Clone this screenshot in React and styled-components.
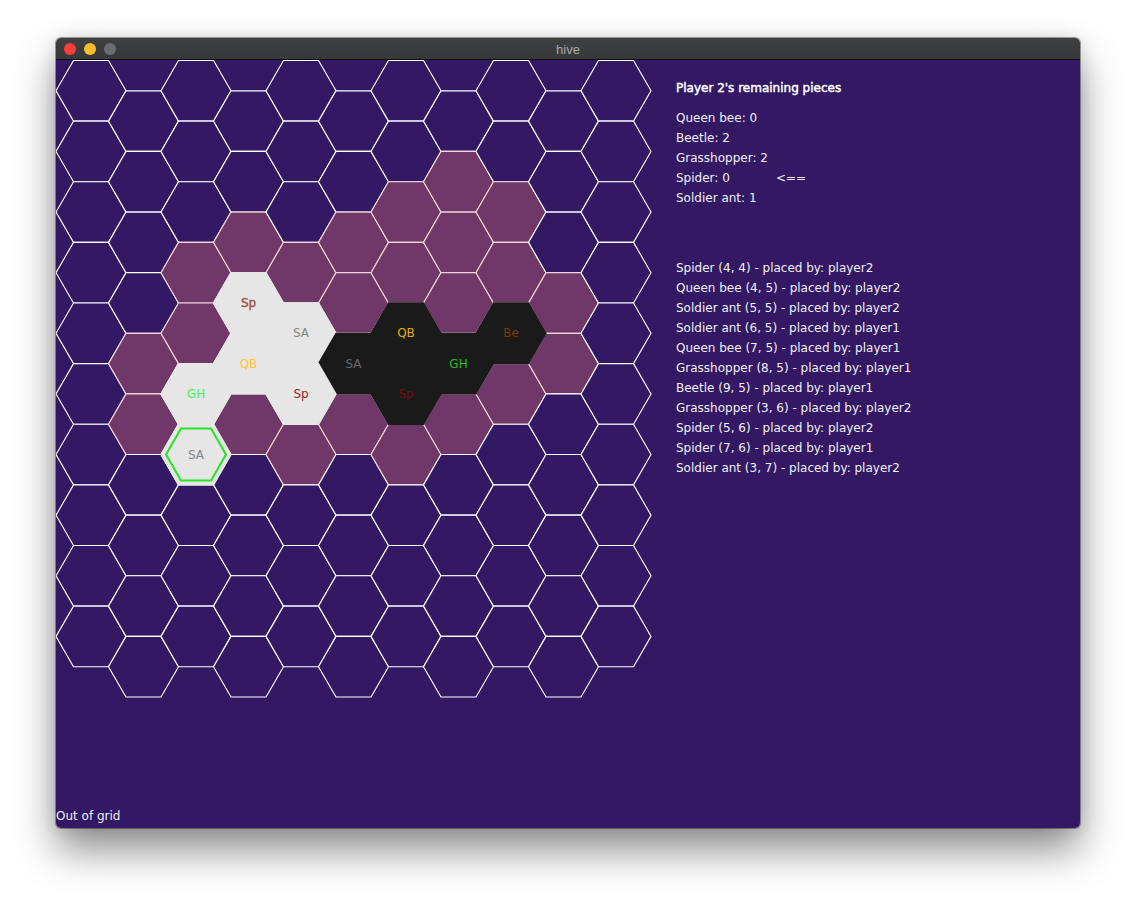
import styled, { createGlobalStyle } from "styled-components";

const SIDE = 35;
const H = (SIDE * Math.sqrt(3)) / 2;
const COLS = 11;
const ROWS = 10;

const mauve = {
  1: [4, 5],
  2: [3, 4],
  3: [2, 5],
  4: [3, 6],
  5: [2, 3, 5],
  6: [2, 3, 6],
  7: [1, 2, 3, 5],
  8: [2, 3, 5],
  9: [3, 4],
};

const pieces = [
  { c: 3, r: 3, label: "Sp", owner: 2, color: "#a4514e", bold: true },
  { c: 3, r: 4, label: "QB", owner: 2, color: "#ffc42e" },
  { c: 4, r: 4, label: "SA", owner: 2, color: "#858585" },
  { c: 5, r: 4, label: "SA", owner: 1, color: "#6a6a6a" },
  { c: 6, r: 4, label: "QB", owner: 1, color: "#e2b100" },
  { c: 7, r: 4, label: "GH", owner: 1, color: "#1fbf1f" },
  { c: 8, r: 4, label: "Be", owner: 1, color: "#7b3b10" },
  { c: 2, r: 5, label: "GH", owner: 2, color: "#4cf04c" },
  { c: 4, r: 5, label: "Sp", owner: 2, color: "#961d1d" },
  { c: 6, r: 5, label: "Sp", owner: 1, color: "#6e1010" },
  { c: 2, r: 6, label: "SA", owner: 2, color: "#858585", selected: true },
];

const remaining = [
  { name: "Queen bee", count: 0 },
  { name: "Beetle", count: 2 },
  { name: "Grasshopper", count: 2 },
  { name: "Spider", count: 0, current: true },
  { name: "Soldier ant", count: 1 },
];

const log = [
  "Spider (4, 4) - placed by: player2",
  "Queen bee (4, 5) - placed by: player2",
  "Soldier ant (5, 5) - placed by: player2",
  "Soldier ant (6, 5) - placed by: player1",
  "Queen bee (7, 5) - placed by: player1",
  "Grasshopper (8, 5) - placed by: player1",
  "Beetle (9, 5) - placed by: player1",
  "Grasshopper (3, 6) - placed by: player2",
  "Spider (5, 6) - placed by: player2",
  "Spider (7, 6) - placed by: player1",
  "Soldier ant (3, 7) - placed by: player2",
];

function center(c, r) {
  return {
    x: SIDE + 1.5 * SIDE * c,
    y: H + 0.5 + 2 * H * r + (c % 2 ? H : 0),
  };
}

function hexPoints(cx, cy, s) {
  const h = (s * Math.sqrt(3)) / 2;
  return [
    [cx - s, cy],
    [cx - s / 2, cy - h],
    [cx + s / 2, cy - h],
    [cx + s, cy],
    [cx + s / 2, cy + h],
    [cx - s / 2, cy + h],
  ]
    .map((p) => p.map((v) => v.toFixed(2)).join(","))
    .join(" ");
}

const Board = () => {
  const cells = [];
  for (let c = 0; c < COLS; c++) {
    for (let r = 0; r < ROWS; r++) {
      const { x, y } = center(c, r);
      const isMauve = (mauve[c] || []).includes(r);
      cells.push(
        <polygon
          key={`${c}-${r}`}
          points={hexPoints(x, y, SIDE)}
          fill={isMauve ? "#6f3869" : "#331963"}
          stroke={isMauve ? "#f4d6d9" : "#ffffff"}
          strokeWidth="1.15"
        />
      );
    }
  }

  return (
    <BoardSvg width="600" height="640" viewBox="0 0 600 640">
      {cells}
      {pieces.map((p) => {
        const { x, y } = center(p.c, p.r);
        const bg = p.owner === 2 ? "#e6e6e6" : "#1a1a1a";
        return (
          <polygon
            key={`p-${p.c}-${p.r}`}
            points={hexPoints(x, y, SIDE)}
            fill={bg}
            stroke={bg}
            strokeWidth="1.3"
          />
        );
      })}
      {pieces
        .filter((p) => p.selected)
        .map((p) => {
          const { x, y } = center(p.c, p.r);
          return (
            <polygon
              key="sel"
              points={hexPoints(x, y, 30)}
              fill="none"
              stroke="#22e622"
              strokeWidth="2"
            />
          );
        })}
      {pieces.map((p) => {
        const { x, y } = center(p.c, p.r);
        return (
          <PieceLabel
            key={`t-${p.c}-${p.r}`}
            x={x}
            y={y + 4}
            fill={p.color}
            stroke={p.bold ? p.color : "none"}
            strokeWidth={p.bold ? 0.45 : 0}
          >
            {p.label}
          </PieceLabel>
        );
      })}
    </BoardSvg>
  );
};

export default function App() {
  return (
    <>
      <GlobalStyle />
      <Page>
        <Window>
          <TitleBar>
            <Lights>
              <Light $color="#fc3d39" />
              <Light $color="#fdbc2e" />
              <Light $color="#6c6c6c" />
            </Lights>
            <Title>hive</Title>
          </TitleBar>
          <Content>
            <BoardArea>
              <Board />
            </BoardArea>
            <SidePanel>
              <PanelTitle>Player 2's remaining pieces</PanelTitle>
              <List>
                {remaining.map((item) => (
                  <Line key={item.name}>
                    <Count>
                      {item.name}: {item.count}
                    </Count>
                    {item.current && <Arrow>&lt;==</Arrow>}
                  </Line>
                ))}
              </List>
              <Log>
                {log.map((entry, index) => (
                  <Line key={index}>{entry}</Line>
                ))}
              </Log>
            </SidePanel>
            <Status>Out of grid</Status>
          </Content>
        </Window>
      </Page>
    </>
  );
}

const GlobalStyle = createGlobalStyle`
  html, body {
    margin: 0;
    padding: 0;
    background: #ffffff;
  }
  body {
    font-family: "DejaVu Sans", "Liberation Sans", sans-serif;
  }
`;

const Page = styled.div`
  width: 1136px;
  height: 902px;
  padding: 38px 0 0 56px;
  box-sizing: border-box;
`;

const Window = styled.div`
  width: 1024px;
  height: 790px;
  display: flex;
  flex-direction: column;
  border-radius: 5px;
  overflow: hidden;
  box-shadow: 0 0 0 1px rgba(0, 0, 0, 0.35), 0 22px 40px rgba(0, 0, 0, 0.45),
    0 0 16px rgba(0, 0, 0, 0.12);
`;

const TitleBar = styled.div`
  position: relative;
  height: 21px;
  padding-top: 1px;
  box-sizing: border-box;
  flex: none;
  display: flex;
  align-items: center;
  justify-content: center;
  background: linear-gradient(#3f4042, #37383a);
  border-bottom: 1px solid #0c0c0c;
  height: 22px;
`;

const Lights = styled.div`
  position: absolute;
  left: 8px;
  top: 5px;
  display: flex;
  gap: 8px;
`;

const Light = styled.span`
  width: 12px;
  height: 12px;
  border-radius: 50%;
  background: ${(p) => p.$color};
`;

const Title = styled.div`
  font-family: "Liberation Sans", "DejaVu Sans", sans-serif;
  font-size: 13px;
  color: #a9a9a9;
`;

const Content = styled.div`
  flex: 1;
  display: grid;
  grid-template-columns: 620px 1fr;
  grid-template-rows: 1fr auto;
  background: #331963;
  color: #f2f0f5;
  font-size: 12px;
`;

const BoardArea = styled.div`
  overflow: hidden;
`;

const BoardSvg = styled.svg`
  display: block;
`;

const PieceLabel = styled.text`
  font-family: "DejaVu Sans", sans-serif;
  font-size: 12px;
  text-anchor: middle;
`;

const SidePanel = styled.div`
  padding-top: 18px;
  display: flex;
  flex-direction: column;
`;

const PanelTitle = styled.div`
  line-height: 20px;
  color: #ffffff;
  -webkit-text-stroke: 0.45px #ffffff;
`;

const List = styled.div`
  margin-top: 10px;
  display: flex;
  flex-direction: column;
`;

const Line = styled.div`
  line-height: 20px;
  white-space: nowrap;
`;

const Count = styled.span`
  display: inline-block;
  width: 100px;
`;

const Arrow = styled.span``;

const Log = styled.div`
  margin-top: 50px;
  display: flex;
  flex-direction: column;
`;

const Status = styled.div`
  grid-column: 1 / -1;
  line-height: 14px;
  padding-bottom: 5px;
`;
